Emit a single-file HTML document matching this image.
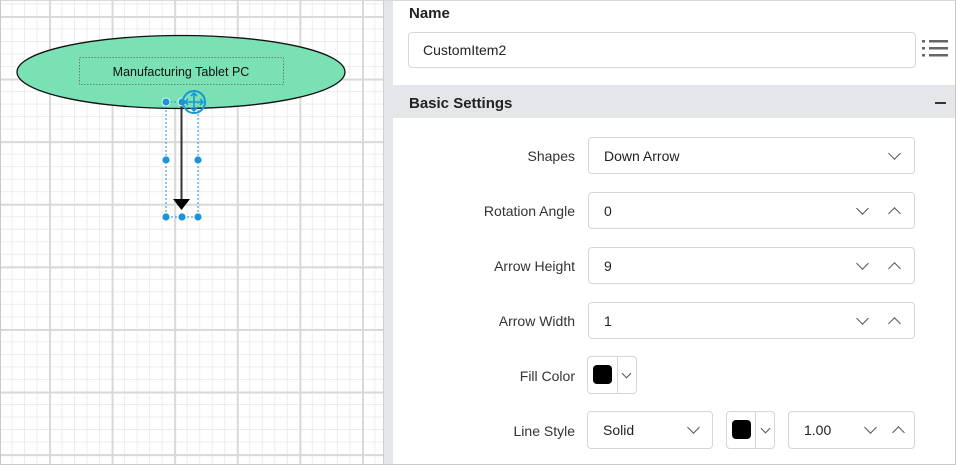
<!DOCTYPE html>
<html><head><style>
*{box-sizing:border-box;margin:0;padding:0}
body{width:956px;height:465px;overflow:hidden;background:#fff;font-family:"Liberation Sans",sans-serif;color:#222;position:relative}
.frame{position:absolute;left:0;top:0;width:956px;height:465px;border:1px solid #c8c8c8;border-top:1px solid #d8d8d8}
.canvas{position:absolute;left:1px;top:1px;width:382px;height:463px;
background-color:#fff;
background-image:
linear-gradient(to right,#d9d9d9 0,#d9d9d9 2px,transparent 2px),
linear-gradient(to bottom,#d9d9d9 0,#d9d9d9 2px,transparent 2px),
linear-gradient(to right,#ececec 0,#ececec 1px,transparent 1px),
linear-gradient(to bottom,#ececec 0,#ececec 1px,transparent 1px);
background-size:62.6px 62.6px,62.6px 62.6px,12.52px 12.52px,12.52px 12.52px;
background-position:48px 15px,48px 15px,48px 15px,48px 15px}
.div{position:absolute;left:383px;top:1px;width:10px;height:463px;background:#e5e6ea;border-left:1px solid #cfcfd3}
.lbl{position:absolute;font-size:14px;color:#333;text-align:right;width:200px;left:375px}
.fld{position:absolute;border:1px solid #d4d6db;border-radius:4px;background:#fff;font-size:14px;color:#222}
.fld span{position:absolute;left:15px;top:10px}
.chev{position:absolute;width:9px;height:9px;border-right:1.8px solid #555;border-bottom:1.8px solid #555}
.dn{transform:rotate(45deg)}
.up{transform:rotate(-135deg)}
.sw{position:absolute;width:19px;height:19px;background:#000;border-radius:4px;left:5px;top:8px}
</style></head><body>
<div class="canvas"></div>
<svg style="position:absolute;left:0;top:0" width="383" height="465">
<ellipse cx="181" cy="72" rx="164" ry="36.5" fill="#79e1b3" stroke="#111" stroke-width="1.3"/>
<rect x="79.5" y="57.5" width="204" height="27" fill="none" stroke="#666" stroke-dasharray="1.5 1.5" stroke-width="0.8"/>
<text x="181" y="76" font-family="Liberation Sans" font-size="12.5" text-anchor="middle" fill="#111">Manufacturing Tablet PC</text>
<line x1="181.5" y1="102" x2="181.5" y2="201" stroke="#333" stroke-width="2"/>
<polygon points="173,199 190,199 181.5,210" fill="#000"/>
<rect x="166" y="102" width="32" height="115" fill="none" stroke="#1a96d8" stroke-dasharray="2 2" stroke-width="1"/>
<g fill="#1a96d8" stroke="#fff" stroke-width="0.8">
<circle cx="166" cy="102" r="4"/><circle cx="182" cy="102" r="4"/>
<circle cx="166" cy="160" r="4"/><circle cx="198" cy="160" r="4"/>
<circle cx="166" cy="217" r="4"/><circle cx="182" cy="217" r="4"/><circle cx="198" cy="217" r="4"/>
</g>
<circle cx="194" cy="102" r="11" fill="none" stroke="#1a96d8" stroke-width="2"/>
<path d="M194 93v18M185 102h18M191 96l3-3 3 3M191 108l3 3 3-3M188 99l-3 3 3 3M200 99l3 3-3 3" stroke="#1a96d8" stroke-width="1.6" fill="none"/>
</svg>
<div class="div"></div>
<div style="position:absolute;left:409px;top:5px;font-size:15px;font-weight:bold;color:#222">Name</div>
<div class="fld" style="left:408px;top:32px;width:508px;height:36px"><span style="left:14px;top:9px">CustomItem2</span></div>
<svg style="position:absolute;left:920px;top:38px" width="30" height="22">
<g fill="#666"><rect x="2" y="2" width="3" height="2.5"/><rect x="2" y="9" width="3" height="2.5"/><rect x="2" y="16" width="3" height="2.5"/>
<rect x="9" y="2" width="19" height="2.5"/><rect x="9" y="9" width="19" height="2.5"/><rect x="9" y="16" width="19" height="2.5"/></g>
</svg>
<div style="position:absolute;left:393px;top:85px;width:562px;height:33px;background:#e5e6ea"></div>
<div style="position:absolute;left:409px;top:95px;font-size:15px;font-weight:bold;color:#222">Basic Settings</div>
<div style="position:absolute;left:935px;top:102px;width:11px;height:1.5px;background:#333"></div>

<div class="lbl" style="top:148px">Shapes</div>
<div class="fld" style="left:588px;top:137px;width:327px;height:37px"><span>Down Arrow</span><i class="chev dn" style="left:301px;top:11px"></i></div>
<div class="lbl" style="top:203px">Rotation Angle</div>
<div class="fld" style="left:588px;top:192px;width:327px;height:37px"><span>0</span><i class="chev dn" style="left:269px;top:11px"></i><i class="chev up" style="left:301px;top:16px"></i></div>
<div class="lbl" style="top:258px">Arrow Height</div>
<div class="fld" style="left:588px;top:247px;width:327px;height:37px"><span>9</span><i class="chev dn" style="left:269px;top:11px"></i><i class="chev up" style="left:301px;top:16px"></i></div>
<div class="lbl" style="top:313px">Arrow Width</div>
<div class="fld" style="left:588px;top:302px;width:327px;height:37px"><span>1</span><i class="chev dn" style="left:269px;top:11px"></i><i class="chev up" style="left:301px;top:16px"></i></div>
<div class="lbl" style="top:368px">Fill Color</div>
<div class="fld" style="left:587px;top:356px;width:50px;height:38px"><i class="sw"></i><div style="position:absolute;left:29px;top:0;width:1px;height:36px;background:#d4d6db"></div><i class="chev dn" style="left:35px;top:13px;width:7px;height:7px"></i></div>
<div class="lbl" style="top:423px">Line Style</div>
<div class="fld" style="left:587px;top:411px;width:126px;height:38px"><span>Solid</span><i class="chev dn" style="left:101px;top:11px"></i></div>
<div class="fld" style="left:726px;top:411px;width:49px;height:38px"><i class="sw"></i><div style="position:absolute;left:28px;top:0;width:1px;height:36px;background:#d4d6db"></div><i class="chev dn" style="left:35px;top:13px;width:7px;height:7px"></i></div>
<div class="fld" style="left:788px;top:411px;width:127px;height:38px"><span>1.00</span><i class="chev dn" style="left:77px;top:11px"></i><i class="chev up" style="left:105px;top:16px"></i></div>
<div class="frame"></div>
</body></html>
